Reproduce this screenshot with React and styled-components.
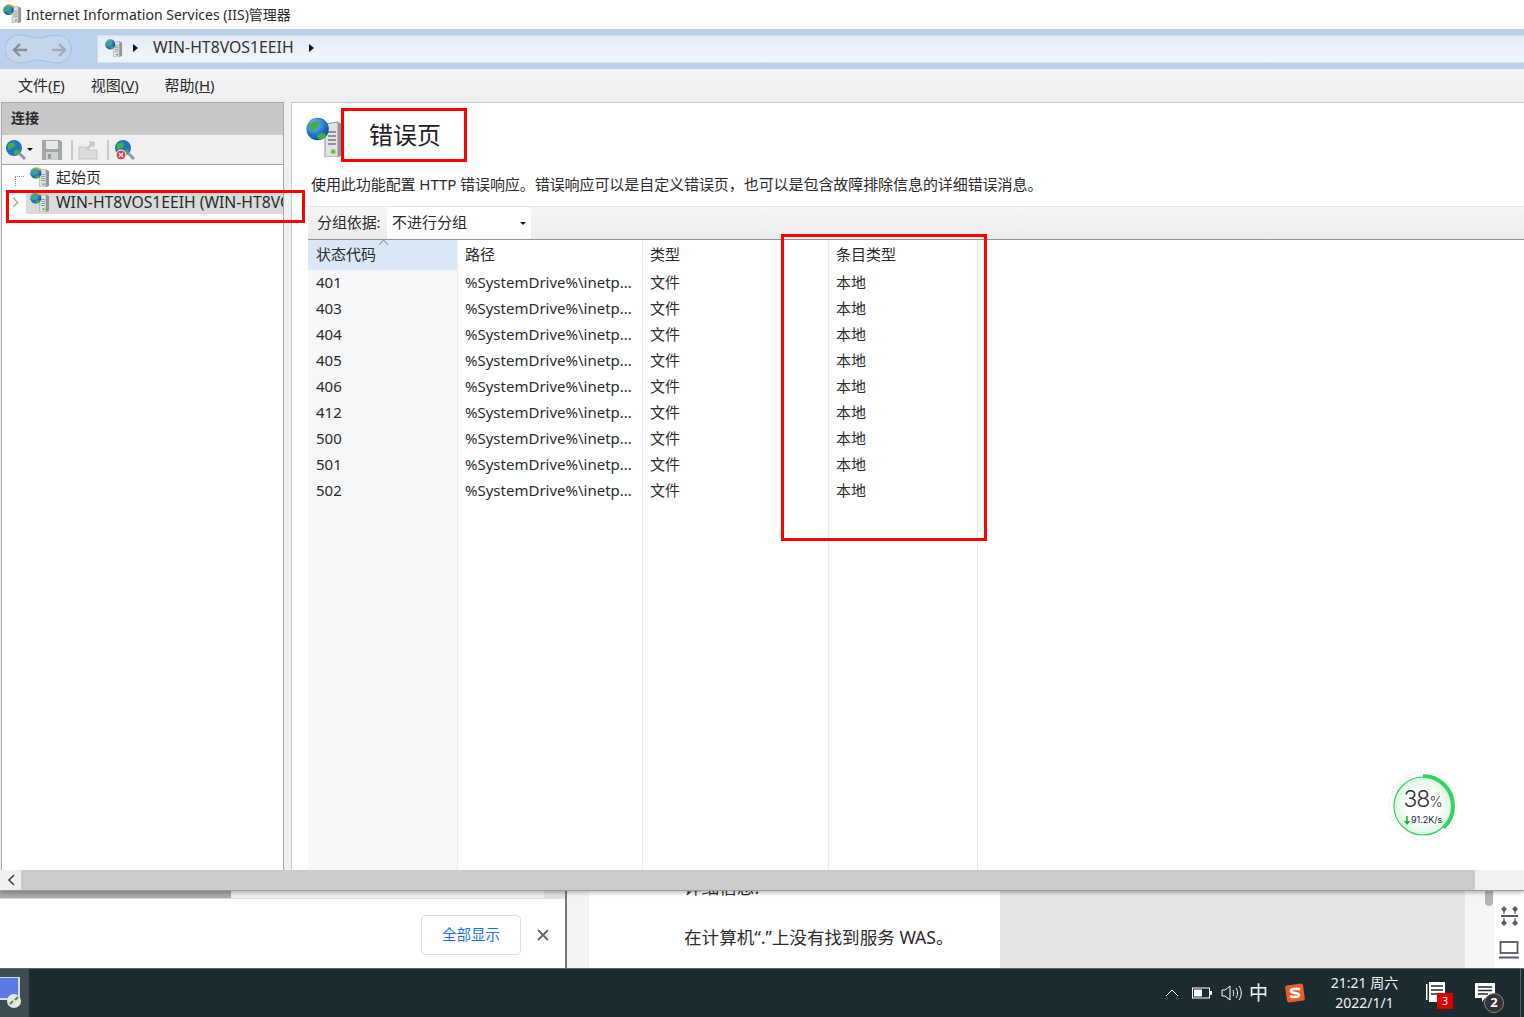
import React from 'react'
import styled, { createGlobalStyle } from 'styled-components'

const Global = createGlobalStyle`
  html, body {
    margin: 0;
    padding: 0;
    background: #fff;
  }
  * { box-sizing: border-box; }
`

const FONT = `"Noto Sans", "Noto Sans CJK SC", sans-serif`

const Page = styled.div`
  position: relative;
  width: 1524px;
  height: 1017px;
  overflow: hidden;
  display: flex;
  flex-direction: column;
  font-family: ${FONT};
  font-size: 15px;
  color: #2b2b2b;
`

const Window = styled.div`
  height: 891px;
  display: flex;
  flex-direction: column;
  background: #fff;
  border-bottom: 1px solid #9c9c9c;
  box-shadow: 0 2px 4px rgba(0, 0, 0, 0.25);
  position: relative;
  z-index: 1;
`

const TitleBar = styled.div`
  height: 29px;
  display: flex;
  align-items: center;
  gap: 4px;
  padding: 0 0 2px 3px;
  font-size: 14px;
  background: #fff;
`

const NavBar = styled.div`
  height: 40px;
  display: flex;
  align-items: center;
  gap: 25px;
  padding-left: 5px;
  background: #b9d1ea;
`

const Address = styled.div`
  flex: 1;
  height: 28px;
  display: flex;
  align-items: center;
  padding: 0 0 2px 7px;
  background: linear-gradient(#e3edf8, #eff5fc);
  border: 1px solid #d2e0ef;
  border-right: 0;
`

const Crumb = styled.span`
  margin-left: ${p => p.$gap}px;
  padding-bottom: 2px;
  font-size: 15.800px;
  color: #333;
`

const Caret = styled.span`
  margin-left: ${p => p.$gap}px;
  width: 0;
  height: 0;
  border-left: 5px solid #111;
  border-top: 4px solid transparent;
  border-bottom: 4px solid transparent;
`

const MenuBar = styled.div`
  height: 33px;
  display: flex;
  align-items: center;
  gap: 25.800px;
  padding: 0 0 2px 18px;
  background: linear-gradient(#f6f6f6, #efefef);
`

const MenuItem = styled.span`
  font-size: 15px;
  u { text-underline-offset: 1px; }
`

const Body = styled.div`
  flex: 1;
  min-height: 0;
  display: flex;
  background: #f0f0f0;
`

const LeftPane = styled.aside`
  width: 283px;
  margin-left: 1px;
  display: flex;
  flex-direction: column;
  background: #fff;
  border: 1px solid #a8a8a8;
  border-bottom: 0;
`

const PaneHead = styled.div`
  height: 32px;
  display: flex;
  align-items: center;
  padding: 0 0 4px 9px;
  background: #c8c8c8;
  font-size: 14px;
  font-weight: 700;
`

const PaneTools = styled.div`
  height: 30px;
  display: flex;
  align-items: center;
  gap: 9px;
  padding-left: 3px;
  background: #f0f0f0;
  border-bottom: 1px solid #a0a0a0;
`

const ToolSep = styled.span`
  width: 2px;
  height: 20px;
  margin-right: -4px;
  background: #c9c9bd;
`

const SmallCaret = styled.span`
  width: 0;
  height: 0;
  margin-left: -9px;
  border-top: 3px solid #111;
  border-left: 3px solid transparent;
  border-right: 3px solid transparent;
`

const Tree = styled.div`
  display: flex;
  flex-direction: column;
  gap: 1px;
  overflow: hidden;
`

const TreeRow = styled.div`
  height: 24px;
  display: flex;
  align-items: center;
  gap: 6px;
  white-space: nowrap;
  font-size: 15px;
  padding-left: ${p => p.$indent}px;
`

const TreeLabel = styled.span`
  padding-bottom: 2px;
`

const Selected = styled.div`
  flex: 1;
  min-width: 0;
  height: 24px;
  display: flex;
  align-items: center;
  gap: 6px;
  padding-left: 4px;
  background: #dadada;
  font-size: 15.700px;
  overflow: hidden;
`

const Dots = styled.span`
  width: 9px;
  height: 10px;
  margin-top: 8px;
  border-left: 1px dotted #888;
  border-top: 1px dotted #888;
`

const Expander = styled.span`
  width: 7px;
  height: 7px;
  margin: 0 3px 0 -1px;
  border-top: 1.500px solid #999;
  border-right: 1.500px solid #999;
  transform: rotate(45deg);
`

const RightPane = styled.main`
  flex: 1;
  margin-left: 7px;
  display: flex;
  flex-direction: column;
  min-width: 0;
  background: #fff;
  border-top: 1px solid #c8c8c8;
  border-left: 1px solid #c8c8c8;
`

const PageHead = styled.div`
  height: 64px;
  display: flex;
  align-items: center;
  gap: 23px;
  padding: 4px 0 0 14px;
`

const PageTitle = styled.h1`
  margin: 0 0 8px;
  font-size: 24px;
  font-weight: 400;
  color: #222;
`

const Description = styled.p`
  margin: 0;
  height: 39px;
  padding: 6px 0 0 19px;
  font-size: 15px;
  white-space: nowrap;
  letter-spacing: -0.070px;
`

const Content = styled.div`
  flex: 1;
  min-height: 0;
  display: flex;
  flex-direction: column;
  margin-left: 16px;
`

const GroupBar = styled.div`
  height: 34px;
  display: flex;
  align-items: stretch;
  background: linear-gradient(#f6f6f6, #ececec);
  border-top: 1px solid #e4e4e4;
  border-bottom: 1px solid #8c97a3;
`

const GroupLabel = styled.span`
  width: 79px;
  padding: 0 0 4px 9px;
  display: flex;
  align-items: center;
  font-size: 15px;
  letter-spacing: -0.100px;
`

const GroupSelect = styled.div`
  width: 144px;
  display: flex;
  align-items: center;
  justify-content: space-between;
  padding: 0 5px 4px;
  background: #fff;
  font-size: 15px;
`

const GroupArrow = styled.span`
  width: 0;
  height: 0;
  margin-top: 4px;
  border-top: 3px solid #111;
  border-left: 3px solid transparent;
  border-right: 3px solid transparent;
`

const Table = styled.div`
  flex: 1;
  min-height: 0;
  display: flex;
  align-items: stretch;
`

const Column = styled.div`
  position: relative;
  width: ${p => p.$width}px;
  background: ${p => (p.$sorted ? '#f6f7f9' : '#fff')};
  border-right: 1px solid #e6ecf5;
`

const HeadCell = styled.div`
  height: 30px;
  display: flex;
  align-items: center;
  padding: 0 0 4px ${p => (p.$sorted ? 8 : 7)}px;
  font-size: 15px;
  background: ${p => (p.$sorted ? '#d9e8f6' : '#fff')};
`

const Cell = styled.div`
  height: 26px;
  display: flex;
  align-items: center;
  padding: 0 0 3px ${p => (p.$sorted ? 8 : 7)}px;
  font-size: 15px;
  white-space: nowrap;
`

const SortMark = styled.span`
  position: absolute;
  left: 72px;
  top: 1px;
  width: 7px;
  height: 7px;
  border-top: 1px solid #999;
  border-left: 1px solid #999;
  transform: rotate(45deg);
`

const ScrollBar = styled.div`
  height: 20px;
  display: flex;
  background: #cbcbcb;
`

const ScrollButton = styled.div`
  width: 21px;
  display: flex;
  align-items: center;
  justify-content: center;
  background: #f1f1f1;
`

const ScrollEnd = styled.div`
  margin-left: auto;
  width: 49px;
  background: #f1f1f1;
`

const Behind = styled.div`
  flex: 1;
  min-height: 0;
  display: flex;
  background: #e6e6e6;
`

const Downloads = styled.div`
  width: 567px;
  display: flex;
  flex-direction: column;
  background: #fff;
  border-right: 2px solid #777;
`

const DownloadTrack = styled.div`
  height: 8px;
  background: #efefef;
  border-right: 21px solid #e2e2e2;
  border-bottom: 1px solid #dcdcdc;
`

const DownloadThumb = styled.div`
  width: 231px;
  height: 7px;
  background: #a9a9a9;
`

const DownloadRow = styled.div`
  flex: 1;
  display: flex;
  align-items: center;
  justify-content: flex-end;
  gap: 16px;
  padding: 3px 16px 0 0;
`

const ShowAll = styled.button`
  width: 100px;
  height: 40px;
  padding: 0 0 3px;
  background: #fff;
  border: 1px solid #dadce0;
  border-radius: 4px;
  color: #1a73e8;
  font-family: ${FONT};
  font-size: 14.500px;
`

const Gutter = styled.div`
  width: 22px;
  background: #f3f3f3;
`

const Article = styled.div`
  width: 411px;
  padding-left: 95px;
  overflow: hidden;
  background: #fff;
  font-size: 17.600px;
  white-space: nowrap;
  line-height: 24px;
`

const ArticleLine = styled.div`
  margin-top: ${p => p.$top}px;
`

const Spacer = styled.div`
  flex: 1;
`

const SideScroll = styled.div`
  width: 29px;
  display: flex;
  justify-content: flex-end;
  padding-right: 1px;
  background: #f5f5f5;
`

const SideThumb = styled.div`
  width: 8px;
  height: 15px;
  background: #b4b4b4;
  border-radius: 0 0 4px 4px;
`

const SideTools = styled.div`
  width: 30px;
  display: flex;
  flex-direction: column;
  align-items: center;
  gap: 15px;
  padding-top: 15px;
  background: #fff;
`

const Taskbar = styled.div`
  height: 49px;
  display: flex;
  align-items: center;
  background: #1b2b30;
  border-top: 1px solid #5d666a;
  color: #f2f2f2;
`

const PinnedApp = styled.div`
  width: 29px;
  height: 100%;
  display: flex;
  align-items: center;
  background: #3d4c50;
  overflow: hidden;
`

const Tray = styled.div`
  margin-left: auto;
  height: 100%;
  display: flex;
  align-items: center;
  padding-right: 3px;
`

const TrayItem = styled.div`
  position: relative;
  width: ${p => p.$width}px;
  padding: 0 ${p => p.$right || 0}px 0 ${p => p.$left || 0}px;
  display: flex;
  justify-content: center;
  align-items: center;
`

const Ime = styled.span`
  font-size: 19px;
  line-height: 24px;
`

const Clock = styled.div`
  width: 70px;
  margin: 0 22.500px 0 12.500px;
  text-align: center;
  font-size: 14px;
  line-height: 20px;
`

const RedBadge = styled.span`
  position: absolute;
  left: 15px;
  top: 11px;
  width: 16px;
  height: 16px;
  background: #d90000;
  color: #fff;
  font-size: 10px;
  line-height: 16px;
  text-align: center;
`

const CountBadge = styled.span`
  position: absolute;
  left: 26px;
  top: 11px;
  width: 20px;
  height: 20px;
  border-radius: 50%;
  background: #333;
  border: 1px solid #888;
  color: #fff;
  font-size: 13px;
  font-weight: 700;
  line-height: 17px;
  text-align: center;
`

const TrayEdge = styled.span`
  width: 1px;
  height: 100%;
  background: #56646a;
`

const RedBox = styled.div`
  position: absolute;
  z-index: 3;
  left: ${p => p.$x}px;
  top: ${p => p.$y}px;
  width: ${p => p.$w}px;
  height: ${p => p.$h}px;
  border: 3px solid #f00;
  pointer-events: none;
`

const Gauge = styled.div`
  position: absolute;
  z-index: 3;
  left: 1388px;
  top: 771px;
  width: 70px;
  height: 70px;
`

const GaugeText = styled.div`
  position: absolute;
  left: 0;
  right: 0;
  top: 14px;
  text-align: center;
  font-family: "Inter", sans-serif;
  font-size: 23px;
  font-weight: 300;
  line-height: 28px;
  color: #333;
  letter-spacing: -1px;
  small { font-size: 14px; letter-spacing: 0; }
`

const GaugeSpeed = styled.div`
  position: absolute;
  left: 16px;
  top: 43px;
  display: flex;
  align-items: center;
  gap: 1px;
  font-family: "Inter", sans-serif;
  font-size: 9px;
  line-height: 12px;
  color: #223;
  white-space: nowrap;
`

const Icon = styled.svg`
  flex: none;
`

// the IIS icon: a server tower with a globe in front
const ServerGlobe = ({ size = 20, arc }) => (
  <Icon width={size} height={size} viewBox="0 0 20 20">
    <defs>
      <radialGradient id="globe" cx="0.35" cy="0.3" r="0.8">
        <stop offset="0" stopColor="#7cc6f5" />
        <stop offset="0.6" stopColor="#1c74c6" />
        <stop offset="1" stopColor="#0e4585" />
      </radialGradient>
    </defs>
    <path d="M9.500 3.500l6.500-1v17.500H9.500z" fill="#dfe3e5" stroke="#8d9397" strokeWidth="0.500" />
    <path d="M16 2.500l3 1.500v15l-3 1z" fill="#8f9599" />
    <path d="M11 7.500h4M11 9.500h4M11 11.500h4M11 13.500h4" stroke="#8d9397" strokeWidth="0.900" />
    <rect x="12.500" y="16.300" width="2.200" height="2" fill="#62c236" />
    <circle cx="5.800" cy="6" r="5.600" fill="url(#globe)" />
    <path d="M1.500 4.200c2-2.500 4-2.500 5-1.500s-1 3-2 3-1 2-2.500 1zM6 8.700c2-1 4-.5 4 .5s-2 2-3 2-2-1.500-1-2.500z" fill="#3fae3f" />
    {arc && <path d="M3.500.8c3-1.300 7-.3 9 2.200l-3 .5C7.800 1.800 6 1.200 3.500.8z" fill="#f0b429" />}
  </Icon>
)

const Nav = () => (
  <Icon width="67" height="30" viewBox="0 0 67 30">
    <path
      d="M14 1c9 0 11 3 19 3s10-3 19-3c8 0 14 6 14 14s-6 14-14 14c-9 0-11-3-19-3s-10 3-19 3C6 29 0 23 0 15S6 1 14 1z"
      fill="#c3d6ea"
      stroke="#a8bed6"
    />
    <path d="M22 16H9m6-6l-6 6 6 6" fill="none" stroke="#8b8f94" strokeWidth="2.400" />
    <path d="M47 16h13m-6-6l6 6-6 6" fill="none" stroke="#a3aab2" strokeWidth="2.400" />
  </Icon>
)

const GlobeTool = ({ stop }) => (
  <Icon width="22" height="22" viewBox="0 0 22 22">
    <circle cx="9" cy="9" r="8" fill="#1c74c6" />
    <path d="M3 6c2-3 6-3 7-1s-2 4-3 4-2 3-4 1zM9 12c3-2 6-1 6 0s-3 4-4 4-3-2-2-4z" fill="#43ad43" />
    <path d="M14 14l6 6" stroke="#8a9aa5" strokeWidth="3" />
    {stop && <circle cx="7" cy="16" r="5" fill="#d8434b" stroke="#fff" />}
    {stop && <path d="M5 14l4 4m0-4l-4 4" stroke="#fff" strokeWidth="1.400" />}
  </Icon>
)

const SaveTool = () => (
  <Icon width="20" height="20" viewBox="0 0 20 20">
    <path d="M0 0h18l2 2v18H0z" fill="#a4a7a8" />
    <rect x="4" y="1" width="12" height="8" fill="#e6e7e7" />
    <rect x="4" y="12" width="12" height="8" fill="#cfd1d1" />
    <rect x="6" y="14" width="3" height="5" fill="#979a9b" />
  </Icon>
)

const UpTool = () => (
  <Icon width="20" height="20" viewBox="0 0 20 20">
    <path d="M1 7h7l2 3h9v9H1z" fill="#dcdcdc" stroke="#c4c4c4" />
    <path d="M11 1l6 1-1 6-2-2-4 4-2-2 4-4z" fill="#c8c8c8" />
  </Icon>
)

const Squeeze = () => (
  <Icon width="17" height="20" viewBox="0 0 17 20" fill="#555a68">
    <path d="M3 0l3 3-3 3-3-3zM14 0l3 3-3 3-3-3zM3 14l3 3-3 3-3-3zM14 14l3 3-3 3-3-3z" />
    <rect x="2.400" y="3" width="1.200" height="5" />
    <rect x="13.400" y="3" width="1.200" height="5" />
    <rect x="2.400" y="12" width="1.200" height="4" />
    <rect x="13.400" y="12" width="1.200" height="4" />
    <rect x="0" y="9" width="17" height="2" />
  </Icon>
)

const Laptop = () => (
  <Icon width="20" height="18" viewBox="0 0 20 18" fill="none" stroke="#555a68" strokeWidth="1.800">
    <rect x="1.500" y="1" width="17" height="11" />
    <path d="M0 16.500h20" strokeWidth="2" />
  </Icon>
)

const Battery = () => (
  <Icon width="20" height="12" viewBox="0 0 20 12">
    <rect x="0.500" y="1" width="17" height="10" fill="none" stroke="#fff" />
    <rect x="2" y="2.500" width="8" height="7" fill="#fff" />
    <rect x="18" y="4" width="2" height="4" fill="#fff" />
  </Icon>
)

const Speaker = () => (
  <Icon width="22" height="18" viewBox="0 0 22 18" fill="none" stroke="#fff">
    <path d="M1 6h3l5-4v14l-5-4H1z" />
    <path d="M12 6c1 2 1 4 0 6M15 4c2 3 2 7 0 10M18 2c3 4 3 10 0 14" />
  </Icon>
)

const Sogou = () => (
  <Icon width="20" height="20" viewBox="0 0 20 20">
    <rect x="1" y="1.500" width="18" height="17" rx="2" fill="#ee5a24" transform="rotate(-8 10 10)" />
    <path d="M15 6.500c-3-1.200-9-1-9 1.500s8 1.500 8 4-6 2.500-9 1" fill="none" stroke="#fff" strokeWidth="2.600" />
  </Icon>
)

const Note = () => (
  <Icon width="20" height="22" viewBox="0 0 20 22">
    <rect x="0" y="2" width="1.500" height="16" fill="#fff" />
    <path d="M3 0h16v20H3z" fill="#fff" />
    <path d="M5 4h12M5 8h12M5 12h7" stroke="#1b2b30" strokeWidth="1.500" />
  </Icon>
)

const Chat = () => (
  <Icon width="22" height="22" viewBox="0 0 22 22">
    <path d="M1 1h20v15H11l-3 4v-4H1z" fill="#fff" />
    <path d="M4 5h14M4 8.500h14M4 12h10" stroke="#1b2b30" strokeWidth="1.300" />
  </Icon>
)

const Monitor = () => (
  <Icon width="25" height="32" viewBox="0 0 25 32">
    <rect x="-6" y="0" width="25" height="22" rx="1" fill="#5b78e6" stroke="#d5d9df" strokeWidth="2" />
    <circle cx="14" cy="24" r="7" fill="#e4e6e6" />
    <path d="M10 27l3-3m2-1l3-3" stroke="#2ea043" strokeWidth="2" />
  </Icon>
)

const DownArrow = () => (
  <Icon width="6" height="9" viewBox="0 0 6 9">
    <path d="M2.200 0h1.600v5H6L3 9 0 5h2.200z" fill="#1faa4d" />
  </Icon>
)

const GaugeRing = () => (
  <Icon width="70" height="70" viewBox="0 0 70 70">
    <defs>
      <radialGradient id="gaugeFill" cx="0.5" cy="0.5" r="0.5">
        <stop offset="0.55" stopColor="#fff" />
        <stop offset="1" stopColor="#d9f6df" />
      </radialGradient>
    </defs>
    <circle cx="35" cy="35" r="34" fill="#fff" stroke="#f2f2f2" />
    <circle cx="35" cy="35" r="29" fill="url(#gaugeFill)" stroke="#2fd15e" strokeWidth="1.200" />
    <circle
      cx="35"
      cy="35"
      r="30"
      fill="none"
      stroke="#36d468"
      strokeWidth="4"
      strokeDasharray="71.600 188.500"
      transform="rotate(-90 35 35)"
    />
  </Icon>
)

const CODES = ['401', '403', '404', '405', '406', '412', '500', '501', '502']

const COLUMNS = [
  { title: '状态代码', width: 150, sorted: true, cell: code => code },
  { title: '路径', width: 185, cell: () => '%SystemDrive%\\inetp...' },
  { title: '类型', width: 186, cell: () => '文件' },
  { title: '条目类型', width: 149, cell: () => '本地' },
]

export default function App() {
  return (
    <Page>
      <Global />
      <Window>
        <TitleBar>
          <ServerGlobe size={19} arc />
          Internet Information Services (IIS)管理器
        </TitleBar>
        <NavBar>
          <Nav />
          <Address>
            <ServerGlobe size={18} />
            <Caret $gap={10} />
            <Crumb $gap={15}>WIN-HT8VOS1EEIH</Crumb>
            <Caret $gap={15} />
          </Address>
        </NavBar>
        <MenuBar>
          <MenuItem>文件(<u>F</u>)</MenuItem>
          <MenuItem>视图(<u>V</u>)</MenuItem>
          <MenuItem>帮助(<u>H</u>)</MenuItem>
        </MenuBar>
        <Body>
          <LeftPane>
            <PaneHead>连接</PaneHead>
            <PaneTools>
              <GlobeTool />
              <SmallCaret />
              <SaveTool />
              <ToolSep />
              <UpTool />
              <ToolSep />
              <GlobeTool stop />
            </PaneTools>
            <Tree>
              <TreeRow $indent={13}>
                <Dots />
                <ServerGlobe size={20} arc />
                <TreeLabel>起始页</TreeLabel>
              </TreeRow>
              <TreeRow $indent={9}>
                <Expander />
                <Selected>
                  <ServerGlobe size={20} arc />
                  WIN-HT8VOS1EEIH (WIN-HT8VOS1EEIH\Administrator)
                </Selected>
              </TreeRow>
            </Tree>
          </LeftPane>
          <RightPane>
            <PageHead>
              <ServerGlobe size={40} />
              <PageTitle>错误页</PageTitle>
            </PageHead>
            <Description>使用此功能配置 HTTP 错误响应。错误响应可以是自定义错误页，也可以是包含故障排除信息的详细错误消息。</Description>
            <Content>
              <GroupBar>
                <GroupLabel>分组依据:</GroupLabel>
                <GroupSelect>
                  不进行分组
                  <GroupArrow />
                </GroupSelect>
              </GroupBar>
              <Table>
                {COLUMNS.map(col => (
                  <Column key={col.title} $width={col.width} $sorted={col.sorted}>
                    {col.sorted && <SortMark />}
                    <HeadCell $sorted={col.sorted}>{col.title}</HeadCell>
                    {CODES.map(code => (
                      <Cell key={code} $sorted={col.sorted}>{col.cell(code)}</Cell>
                    ))}
                  </Column>
                ))}
              </Table>
            </Content>
          </RightPane>
        </Body>
        <ScrollBar>
          <ScrollButton>
            <svg width="8" height="12" viewBox="0 0 8 12">
              <path d="M7 1L2 6l5 5" fill="none" stroke="#444" strokeWidth="1.600" />
            </svg>
          </ScrollButton>
          <ScrollEnd />
        </ScrollBar>
      </Window>
      <Behind>
        <Downloads>
          <DownloadTrack>
            <DownloadThumb />
          </DownloadTrack>
          <DownloadRow>
            <ShowAll>全部显示</ShowAll>
            <svg width="12" height="12" viewBox="0 0 12 12">
              <path d="M1 1l10 10M11 1L1 11" stroke="#666" strokeWidth="1.800" />
            </svg>
          </DownloadRow>
        </Downloads>
        <Gutter />
        <Article>
          <ArticleLine $top={-16}>详细信息:</ArticleLine>
          <ArticleLine $top={26}>在计算机“.”上没有找到服务 WAS。</ArticleLine>
        </Article>
        <Spacer />
        <SideScroll>
          <SideThumb />
        </SideScroll>
        <SideTools>
          <Squeeze />
          <Laptop />
        </SideTools>
      </Behind>
      <Taskbar>
        <PinnedApp>
          <Monitor />
        </PinnedApp>
        <Tray>
          <TrayItem $width={30}>
            <svg width="14" height="8" viewBox="0 0 14 8">
              <path d="M1 7l6-6 6 6" fill="none" stroke="#fff" />
            </svg>
          </TrayItem>
          <TrayItem $width={30}>
            <Battery />
          </TrayItem>
          <TrayItem $width={28} $left={2}>
            <Speaker />
          </TrayItem>
          <TrayItem $width={27}>
            <Ime>中</Ime>
          </TrayItem>
          <TrayItem $width={45}>
            <Sogou />
          </TrayItem>
          <Clock>
            21:21 周六
            <br />
            2022/1/1
          </Clock>
          <TrayItem $width={36} $right={8}>
            <Note />
            <RedBadge>3</RedBadge>
          </TrayItem>
          <TrayItem $width={62} $right={8}>
            <Chat />
            <CountBadge>2</CountBadge>
          </TrayItem>
          <TrayEdge />
        </Tray>
      </Taskbar>
      <RedBox $x={6} $y={190} $w={299} $h={33} />
      <RedBox $x={341} $y={108} $w={126} $h={54} />
      <RedBox $x={781} $y={234} $w={206} $h={307} />
      <Gauge>
        <GaugeRing />
        <GaugeText>
          38<small>%</small>
        </GaugeText>
        <GaugeSpeed>
          <DownArrow />
          91.2K/s
        </GaugeSpeed>
      </Gauge>
    </Page>
  )
}
